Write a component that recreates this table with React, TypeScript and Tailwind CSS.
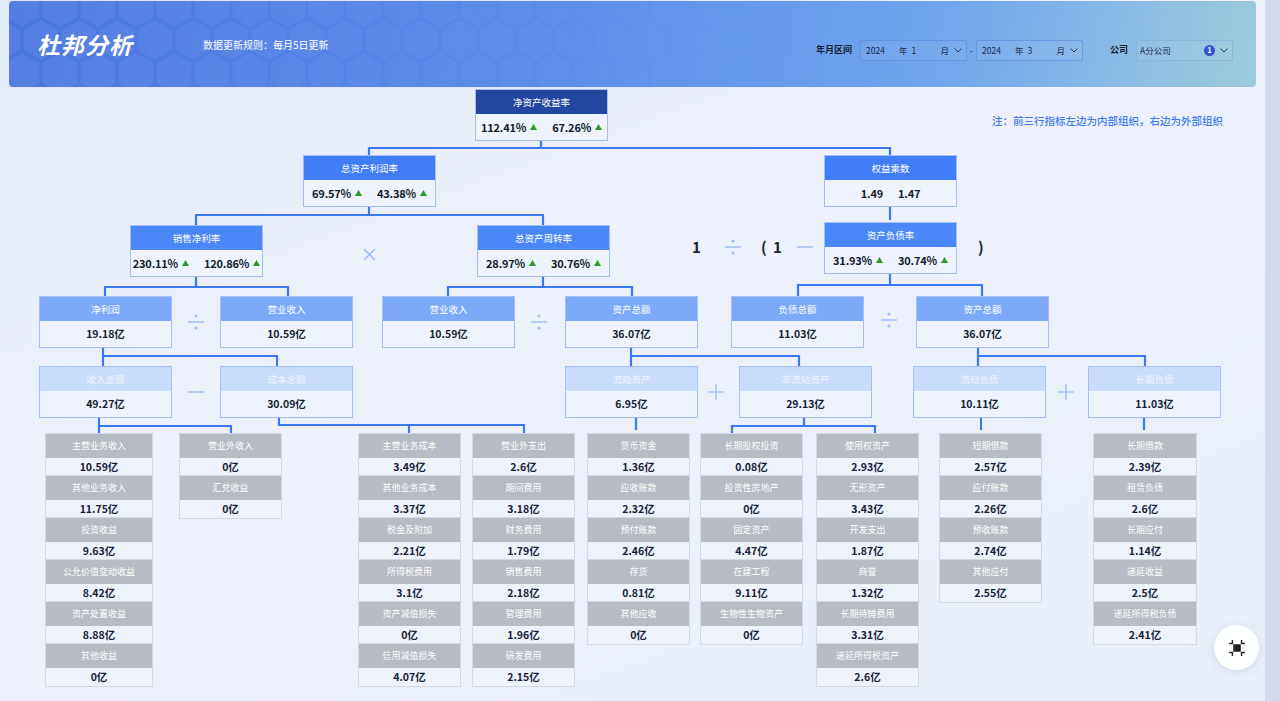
import React from "react";

type Val = { v: string; up?: boolean };

type NodeProps = {
  pos: string;
  title: string;
  head: string;
  vals: Val[];
  amount?: boolean;
};

type ListProps = {
  pos: string;
  items: [string, string][];
};

// connector paths, drawn in page coordinates
const LINES = [
  "M541 141V148 M369 156V148H890V156",
  "M369 207V215 M196 225V215H543V225",
  "M890 208V219",
  "M196 277V287 M105 296V287H288V296",
  "M543 277V287 M448 296V287H632V296",
  "M890 274V285 M798 296V285H982V296",
  "M103 347V366 M103 356H277V366",
  "M631 347V366 M631 356H799V366",
  "M978 347V366 M978 356H1145V366",
  "M99 418V433 M99 426H231V433",
  "M279 418V425H524V433 M409 425V433",
  "M636 418V429",
  "M804 418V426 M732 433V426H875V433",
  "M981 418V429",
  "M1144 418V429",
];

const hex = (cx: number, cy: number, r: number) =>
  [0, 60, 120, 180, 240, 300]
    .map((a) => {
      const rad = ((a - 90) * Math.PI) / 180;
      return `${(cx + r * Math.cos(rad)).toFixed(1)},${(cy + r * Math.sin(rad)).toFixed(1)}`;
    })
    .join(" ");

const Up = () => (
  <svg width="7" height="6" viewBox="0 0 7 6" className="ml-[4px]">
    <polygon points="3.5,0 7,6 0,6" fill="#2f9a26" />
  </svg>
);

const Chevron = () => (
  <svg width="8" height="5" viewBox="0 0 8 5" className="ml-[5px]">
    <path d="M0.6 0.6L4 4L7.4 0.6" fill="none" stroke="#2a3a5e" strokeWidth="1" />
  </svg>
);

const Divide = ({ pos }: { pos: string }) => (
  <svg width="16" height="18" viewBox="0 0 16 18" className={`absolute ${pos}`}>
    <circle cx="8" cy="3" r="1.6" fill="#a2bff3" />
    <path d="M0 9H16" stroke="#a2bff3" strokeWidth="1.5" />
    <circle cx="8" cy="15" r="1.6" fill="#a2bff3" />
  </svg>
);

const Minus = ({ pos }: { pos: string }) => (
  <svg width="16" height="4" viewBox="0 0 16 4" className={`absolute ${pos}`}>
    <path d="M0 2H16" stroke="#a2bff3" strokeWidth="1.5" />
  </svg>
);

const Plus = ({ pos }: { pos: string }) => (
  <svg width="16" height="16" viewBox="0 0 16 16" className={`absolute ${pos}`}>
    <path d="M0 8H16 M8 0V16" stroke="#a9c5f6" strokeWidth="1.6" />
  </svg>
);

const Node = ({ pos, title, head, vals, amount }: NodeProps) => (
  <div
    className={`absolute flex flex-col border-[1.5px] border-[#a3bff5] bg-[#eef3fd] ${pos}`}
  >
    <div className={`flex h-[24px] shrink-0 items-center justify-center text-[9.5px] ${head}`}>
      {title}
    </div>
    <div className="flex flex-1 items-center justify-center gap-[15px]">
      {vals.map((x, i) => (
        <div
          key={i}
          className={
            amount
              ? "text-[10.5px] font-bold text-[#161e34]"
              : "flex items-center text-[11px] font-semibold tracking-[-0.2px] text-[#141b2d]"
          }
        >
          {x.v}
          {x.up && <Up />}
        </div>
      ))}
    </div>
  </div>
);

const ListCol = ({ pos, items }: ListProps) => (
  <div className={`absolute flex flex-col border border-[#d3d9e4] ${pos}`}>
    {items.map(([k, v]) => (
      <React.Fragment key={k}>
        <div className="flex h-[24px] items-center justify-center bg-[#b7bbc3] text-[9px] text-white">
          {k}
        </div>
        <div className="flex h-[18px] items-center justify-center border-b border-[#d3d9e4] bg-[#eef2fb] text-[10.5px] font-bold text-[#16203b] last:border-b-0">
          {v}
        </div>
      </React.Fragment>
    ))}
  </div>
);

const MonthSelect = ({ month }: { month: string }) => (
  <div className="flex h-[21px] w-[107px] items-center rounded-[2px] border border-[#5f8be0]/70 bg-white/5 pl-[5px] pr-[4px]">
    <span className="w-[33px]">2024</span>
    <span>年</span>
    <span className="ml-[4px]">{month}</span>
    <span className="ml-auto">月</span>
    <Chevron />
  </div>
);

export default function App() {
  return (
    <div className="flex h-[701px] w-[1280px] overflow-hidden bg-[#e9eff9] font-['Noto_Sans_CJK_SC','Noto_Sans',sans-serif]">
      <div className="relative flex flex-1 flex-col bg-[linear-gradient(160deg,#e4ebf8_0%,#ecf1fb_40%,#e9eff9_100%)]">
        {/* header */}
        <div className="relative mx-[9px] mt-[1px] flex h-[86px] shrink-0 items-center overflow-hidden rounded-[4px] bg-[linear-gradient(100deg,#4874e0_0%,#5b8cea_45%,#72a6ee_75%,#9dcbdc_100%)] pl-[28px]">
          <svg className="absolute inset-0 h-full w-full" aria-hidden>
            <defs>
              <pattern id="hex" width="38" height="66" patternUnits="userSpaceOnUse" x="-6" y="-14">
                {[
                  [19, 20],
                  [0, 53],
                  [38, 53],
                  [0, -13],
                  [38, -13],
                ].map(([cx, cy], i) => (
                  <polygon key={i} points={hex(cx, cy, 20)} fill="#ffffff" fillOpacity="0.07" />
                ))}
              </pattern>
              <linearGradient id="hexfade" x1="0" x2="1" y1="0" y2="0">
                <stop offset="0" stopColor="#fff" stopOpacity="1" />
                <stop offset="0.7" stopColor="#fff" stopOpacity="0" />
              </linearGradient>
              <mask id="hexmask">
                <rect width="100%" height="100%" fill="url(#hexfade)" />
              </mask>
            </defs>
            <rect width="100%" height="100%" fill="url(#hex)" mask="url(#hexmask)" />
          </svg>

          <div className="relative text-[23px] font-bold italic tracking-[1px] text-white">
            杜邦分析
          </div>
          <div className="relative ml-[70px] text-[10px] text-white">数据更新规则：每月5日更新</div>

          {/* filters */}
          <div className="relative ml-auto mr-[23px] mt-[12px] flex items-center text-[8.5px] text-[#1c2846]">
            <span className="mr-[8px] text-[9px] font-bold text-[#141d33]">年月区间</span>
            <MonthSelect month="1" />
            <span className="mx-[3px]">-</span>
            <MonthSelect month="3" />
            <span className="ml-[27px] mr-[8px] text-[9px] font-bold text-[#141d33]">公司</span>
            <div className="flex h-[21px] w-[97px] items-center rounded-[2px] border border-[#7fb0dc]/70 bg-white/5 pl-[3px] pr-[4px]">
              <span>A分公司</span>
              <span className="ml-auto flex h-[11px] w-[11px] items-center justify-center rounded-full bg-[#3553d8] text-[7.5px] font-bold text-white">
                1
              </span>
              <Chevron />
            </div>
          </div>
        </div>

        {/* diagram canvas */}
        <div className="relative flex-1">
          <svg
            className="pointer-events-none absolute left-0 top-0"
            width={1265}
            height={614}
            viewBox="0 87 1265 614"
          >
            {LINES.map((d, i) => (
              <path key={i} d={d} fill="none" stroke="#3a79f3" strokeWidth="2.2" strokeLinecap="square" />
            ))}
          </svg>

          <div className="absolute right-[42px] top-[26px] text-[10.5px] font-medium text-[#3f7cf2]">
            注：前三行指标左边为内部组织，右边为外部组织
          </div>

          {/* level 0 - 2 */}
          <Node
            pos="left-[475px] top-[2px] h-[52px] w-[133px]"
            title="净资产收益率"
            head="bg-[#23479f] text-white"
            vals={[
              { v: "112.41%", up: true },
              { v: "67.26%", up: true },
            ]}
          />
          <Node
            pos="left-[303px] top-[68px] h-[52px] w-[133px]"
            title="总资产利润率"
            head="bg-[#3f7ef7] text-white"
            vals={[
              { v: "69.57%", up: true },
              { v: "43.38%", up: true },
            ]}
          />
          <Node
            pos="left-[824px] top-[68px] h-[52px] w-[133px]"
            title="权益乘数"
            head="bg-[#3f7ef7] text-white"
            vals={[{ v: "1.49" }, { v: "1.47" }]}
          />
          <Node
            pos="left-[130px] top-[138px] h-[52px] w-[133px]"
            title="销售净利率"
            head="bg-[#4a88f8] text-white"
            vals={[
              { v: "230.11%", up: true },
              { v: "120.86%", up: true },
            ]}
          />
          <Node
            pos="left-[477px] top-[138px] h-[52px] w-[133px]"
            title="总资产周转率"
            head="bg-[#4a88f8] text-white"
            vals={[
              { v: "28.97%", up: true },
              { v: "30.76%", up: true },
            ]}
          />
          <Node
            pos="left-[824px] top-[135px] h-[52px] w-[133px]"
            title="资产负债率"
            head="bg-[#4a88f8] text-white"
            vals={[
              { v: "31.93%", up: true },
              { v: "30.74%", up: true },
            ]}
          />

          <svg width="13" height="13" viewBox="0 0 13 13" className="absolute left-[363px] top-[161px]">
            <path d="M1 1L12 12 M12 1L1 12" stroke="#9fbcf2" strokeWidth="1.5" />
          </svg>

          {/* formula */}
          <span className="absolute left-[692px] top-[149px] text-[15px] font-bold text-[#1a1f2e]">1</span>
          <Divide pos="left-[725px] top-[151px]" />
          <span className="absolute left-[761px] top-[149px] text-[15px] font-bold text-[#1a1f2e]">(</span>
          <span className="absolute left-[773px] top-[149px] text-[15px] font-bold text-[#1a1f2e]">1</span>
          <Minus pos="left-[797px] top-[158px]" />
          <span className="absolute left-[978px] top-[149px] text-[15px] font-bold text-[#1a1f2e]">)</span>

          {/* level 3 */}
          {[
            ["left-[39px]", "净利润", "19.18亿"],
            ["left-[220px]", "营业收入", "10.59亿"],
            ["left-[382px]", "营业收入", "10.59亿"],
            ["left-[565px]", "资产总额", "36.07亿"],
            ["left-[731px]", "负债总额", "11.03亿"],
            ["left-[916px]", "资产总额", "36.07亿"],
          ].map(([l, t, v], i) => (
            <Node
              key={i}
              pos={`${l} top-[209px] h-[52px] w-[133px]`}
              title={t}
              head="bg-[#7caaf9] text-white"
              vals={[{ v }]}
              amount
            />
          ))}
          <Divide pos="left-[188px] top-[226px]" />
          <Divide pos="left-[531px] top-[226px]" />
          <Divide pos="left-[881px] top-[224px]" />

          {/* level 4 */}
          {[
            ["left-[39px]", "收入总额", "49.27亿"],
            ["left-[220px]", "成本总额", "30.09亿"],
            ["left-[565px]", "流动资产", "6.95亿"],
            ["left-[739px]", "非流动资产", "29.13亿"],
            ["left-[913px]", "流动负债", "10.11亿"],
            ["left-[1088px]", "长期负债", "11.03亿"],
          ].map(([l, t, v], i) => (
            <Node
              key={i}
              pos={`${l} top-[279px] h-[52px] w-[133px]`}
              title={t}
              head="bg-[#c9dcfb] text-[#eef4ff]"
              vals={[{ v }]}
              amount
            />
          ))}
          <Minus pos="left-[188px] top-[303px]" />
          <Plus pos="left-[708px] top-[297px]" />
          <Plus pos="left-[1058px] top-[297px]" />

          {/* detail lists */}
          <ListCol
            pos="left-[45px] top-[346px] w-[108px]"
            items={[
              ["主营业务收入", "10.59亿"],
              ["其他业务收入", "11.75亿"],
              ["投资收益", "9.63亿"],
              ["公允价值变动收益", "8.42亿"],
              ["资产处置收益", "8.88亿"],
              ["其他收益", "0亿"],
            ]}
          />
          <ListCol
            pos="left-[179px] top-[346px] w-[103px]"
            items={[
              ["营业外收入", "0亿"],
              ["汇兑收益", "0亿"],
            ]}
          />
          <ListCol
            pos="left-[358px] top-[346px] w-[103px]"
            items={[
              ["主营业务成本", "3.49亿"],
              ["其他业务成本", "3.37亿"],
              ["税金及附加", "2.21亿"],
              ["所得税费用", "3.1亿"],
              ["资产减值损失", "0亿"],
              ["信用减值损失", "4.07亿"],
            ]}
          />
          <ListCol
            pos="left-[472px] top-[346px] w-[103px]"
            items={[
              ["营业外支出", "2.6亿"],
              ["期间费用", "3.18亿"],
              ["财务费用", "1.79亿"],
              ["销售费用", "2.18亿"],
              ["管理费用", "1.96亿"],
              ["研发费用", "2.15亿"],
            ]}
          />
          <ListCol
            pos="left-[587px] top-[346px] w-[103px]"
            items={[
              ["货币资金", "1.36亿"],
              ["应收账款", "2.32亿"],
              ["预付账款", "2.46亿"],
              ["存货", "0.81亿"],
              ["其他应收", "0亿"],
            ]}
          />
          <ListCol
            pos="left-[700px] top-[346px] w-[103px]"
            items={[
              ["长期股权投资", "0.08亿"],
              ["投资性房地产", "0亿"],
              ["固定资产", "4.47亿"],
              ["在建工程", "9.11亿"],
              ["生物性生物资产", "0亿"],
            ]}
          />
          <ListCol
            pos="left-[816px] top-[346px] w-[103px]"
            items={[
              ["使用权资产", "2.93亿"],
              ["无形资产", "3.43亿"],
              ["开发支出", "1.87亿"],
              ["商誉", "1.32亿"],
              ["长期待摊费用", "3.31亿"],
              ["递延所得税资产", "2.6亿"],
            ]}
          />
          <ListCol
            pos="left-[939px] top-[346px] w-[103px]"
            items={[
              ["短期借款", "2.57亿"],
              ["应付账款", "2.26亿"],
              ["预收账款", "2.74亿"],
              ["其他应付", "2.55亿"],
            ]}
          />
          <ListCol
            pos="left-[1093px] top-[346px] w-[104px]"
            items={[
              ["长期借款", "2.39亿"],
              ["租赁负债", "2.6亿"],
              ["长期应付", "1.14亿"],
              ["递延收益", "2.5亿"],
              ["递延所得税负债", "2.41亿"],
            ]}
          />

          {/* floating fullscreen-exit button */}
          <button className="absolute left-[1214px] top-[538px] flex h-[45px] w-[45px] items-center justify-center rounded-full bg-white/95 shadow-[0_2px_8px_rgba(60,80,130,0.15)]">
            <svg width="20" height="20" viewBox="0 0 24 24">
              <rect x="7.5" y="7.5" width="9" height="9" fill="#1f1f1f" />
              <path
                d="M2.5 6.5H6.5V2.5 M21.5 6.5H17.5V2.5 M2.5 17.5H6.5V21.5 M21.5 17.5H17.5V21.5"
                fill="none"
                stroke="#2a2a2a"
                strokeWidth="1.8"
              />
            </svg>
          </button>
        </div>
      </div>
      {/* scrollbar track */}
      <div className="w-[15px] shrink-0 bg-[#d3dbea]" />
    </div>
  );
}
